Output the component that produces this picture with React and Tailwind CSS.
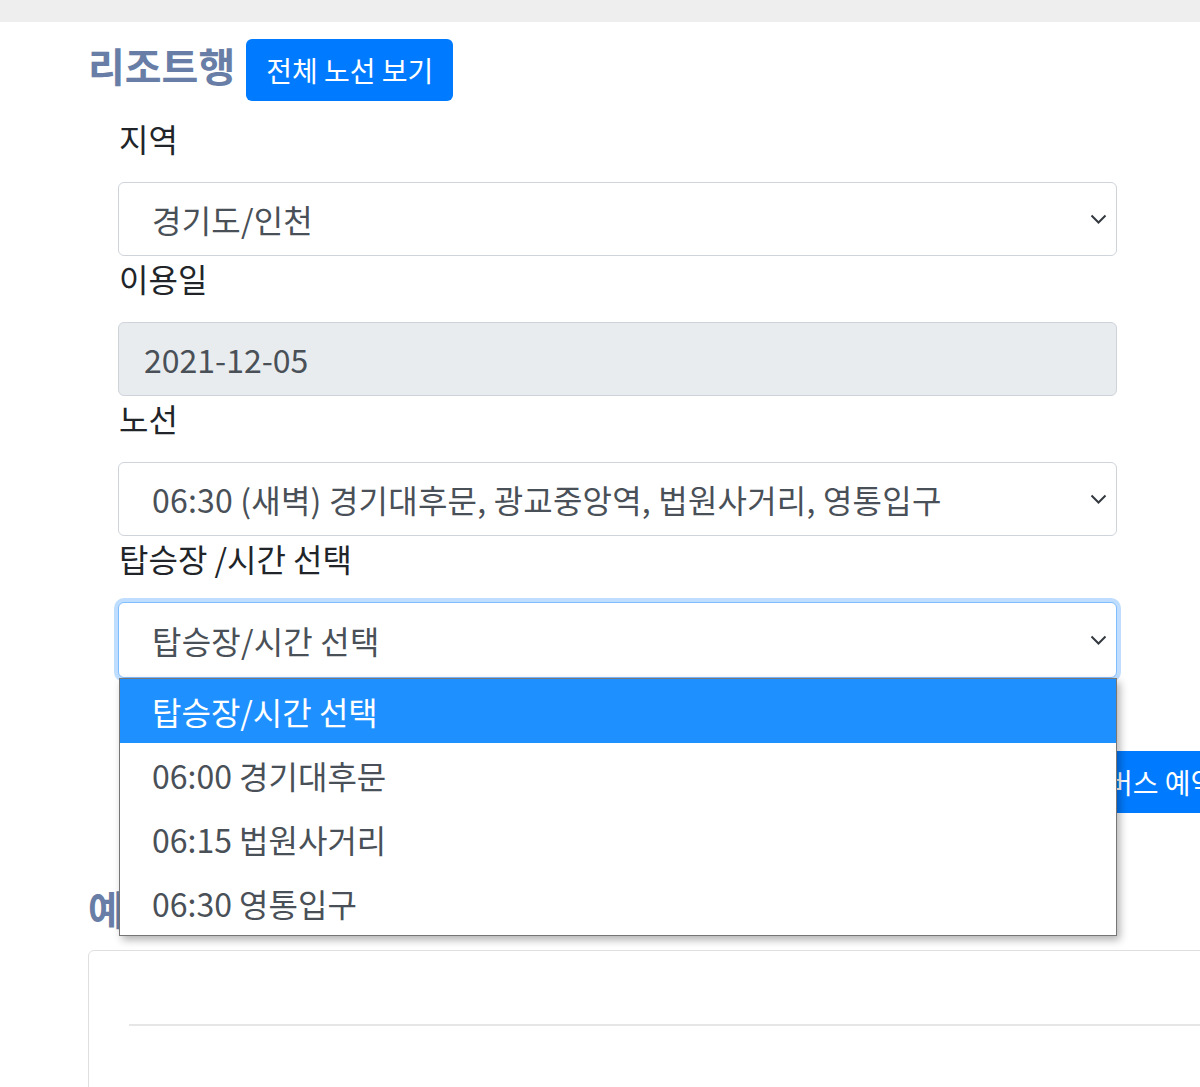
import React from 'react';

const Chevron = () => (
    <svg width="17" height="10" viewBox="0 0 17 10" fill="none" className="shrink-0">
        <polyline points="1.5,1.5 8.5,8.5 15.5,1.5" stroke="#343a40" strokeWidth="2" />
    </svg>
);

const options = ['탑승장/시간 선택', '06:00 경기대후문', '06:15 법원사거리', '06:30 영통입구'];

function Label({ children }) {
    return <div className="text-[32px] leading-[45px] mb-[21px] text-[#212529] pl-px">{children}</div>;
}

function Select({ value, focused }) {
    return (
        <div
            className={
                focused
                    ? 'h-[76px] flex items-center justify-between pl-[33px] pr-[9px] rounded-[6px] border border-[#80bdff] bg-white shadow-[0_0_0_4px_rgba(0,123,255,0.25)] text-[32px] text-[#495057]'
                    : 'h-[74px] flex items-center justify-between pl-[33px] pr-[9px] rounded-[6px] border border-[#ced4da] bg-white text-[32px] text-[#495057]'
            }
        >
            <span className="tracking-[0.2px]">{value}</span>
            <Chevron />
        </div>
    );
}

export default function App() {
    return (
        <div className="min-h-[1087px] w-full overflow-hidden bg-white font-['Noto_Sans_CJK_KR','Noto_Sans',sans-serif]">
            <div className="h-[22px] bg-[#eeeeee]" />

            <div className="pl-[88px]">
                {/* 헤더 */}
                <div className="flex items-center gap-[11px] pt-[17px]">
                    <h1 className="text-[40px] leading-[48px] font-bold text-[#687ea6] -mt-[10px]">리조트행</h1>
                    <button className="h-[62px] px-[20px] rounded-[6px] bg-[#007bff] text-white text-[28px] whitespace-nowrap">
                        전체 노선 보기
                    </button>
                </div>

                {/* 예약 폼 */}
                <div className="mt-[15px] ml-[30px] w-[999px]">
                    <Label>지역</Label>
                    <Select value="경기도/인천" />

                    <Label>이용일</Label>
                    <div className="h-[74px] flex items-center pl-[25px] rounded-[6px] border border-[#ced4da] bg-[#e9ecef] text-[32px] text-[#495057]">
                        2021-12-05
                    </div>

                    <Label>노선</Label>
                    <Select value="06:30 (새벽) 경기대후문, 광교중앙역, 법원사거리, 영통입구" />

                    <Label>탑승장 /시간 선택</Label>
                    <div className="relative">
                        <Select value="탑승장/시간 선택" focused />
                        <div className="absolute top-full left-px right-0 z-10 border border-[#767676] bg-white shadow-[3px_4px_8px_rgba(0,0,0,0.3)]">
                            {options.map((opt, i) => (
                                <div
                                    key={opt}
                                    className={
                                        i === 0
                                            ? 'h-[64px] flex items-center pl-[32px] text-[32px] bg-[#1e90ff] text-white'
                                            : 'h-[64px] flex items-center pl-[32px] text-[32px] text-[#495057]'
                                    }
                                >
                                    {opt}
                                </div>
                            ))}
                        </div>
                    </div>
                </div>

                {/* 예약 버튼 */}
                <div className="mt-[73px] pl-[1000px] flex">
                    <button className="h-[62px] px-[19px] rounded-[6px] bg-[#007bff] text-white text-[28px] whitespace-nowrap shrink-0">
                        버스 예약하기
                    </button>
                </div>

                {/* 예약 내역 */}
                <h2 className="mt-[71px] text-[40px] leading-[48px] font-bold text-[#687ea6]">예약 내역</h2>
                <div className="mt-[18px] w-[1200px] h-[200px] rounded-tl-[6px] border border-[#dfdfdf] pl-[40px] pt-[73px]">
                    <div className="h-[2px] bg-[#e6e6e6]" />
                </div>
            </div>
        </div>
    );
}
